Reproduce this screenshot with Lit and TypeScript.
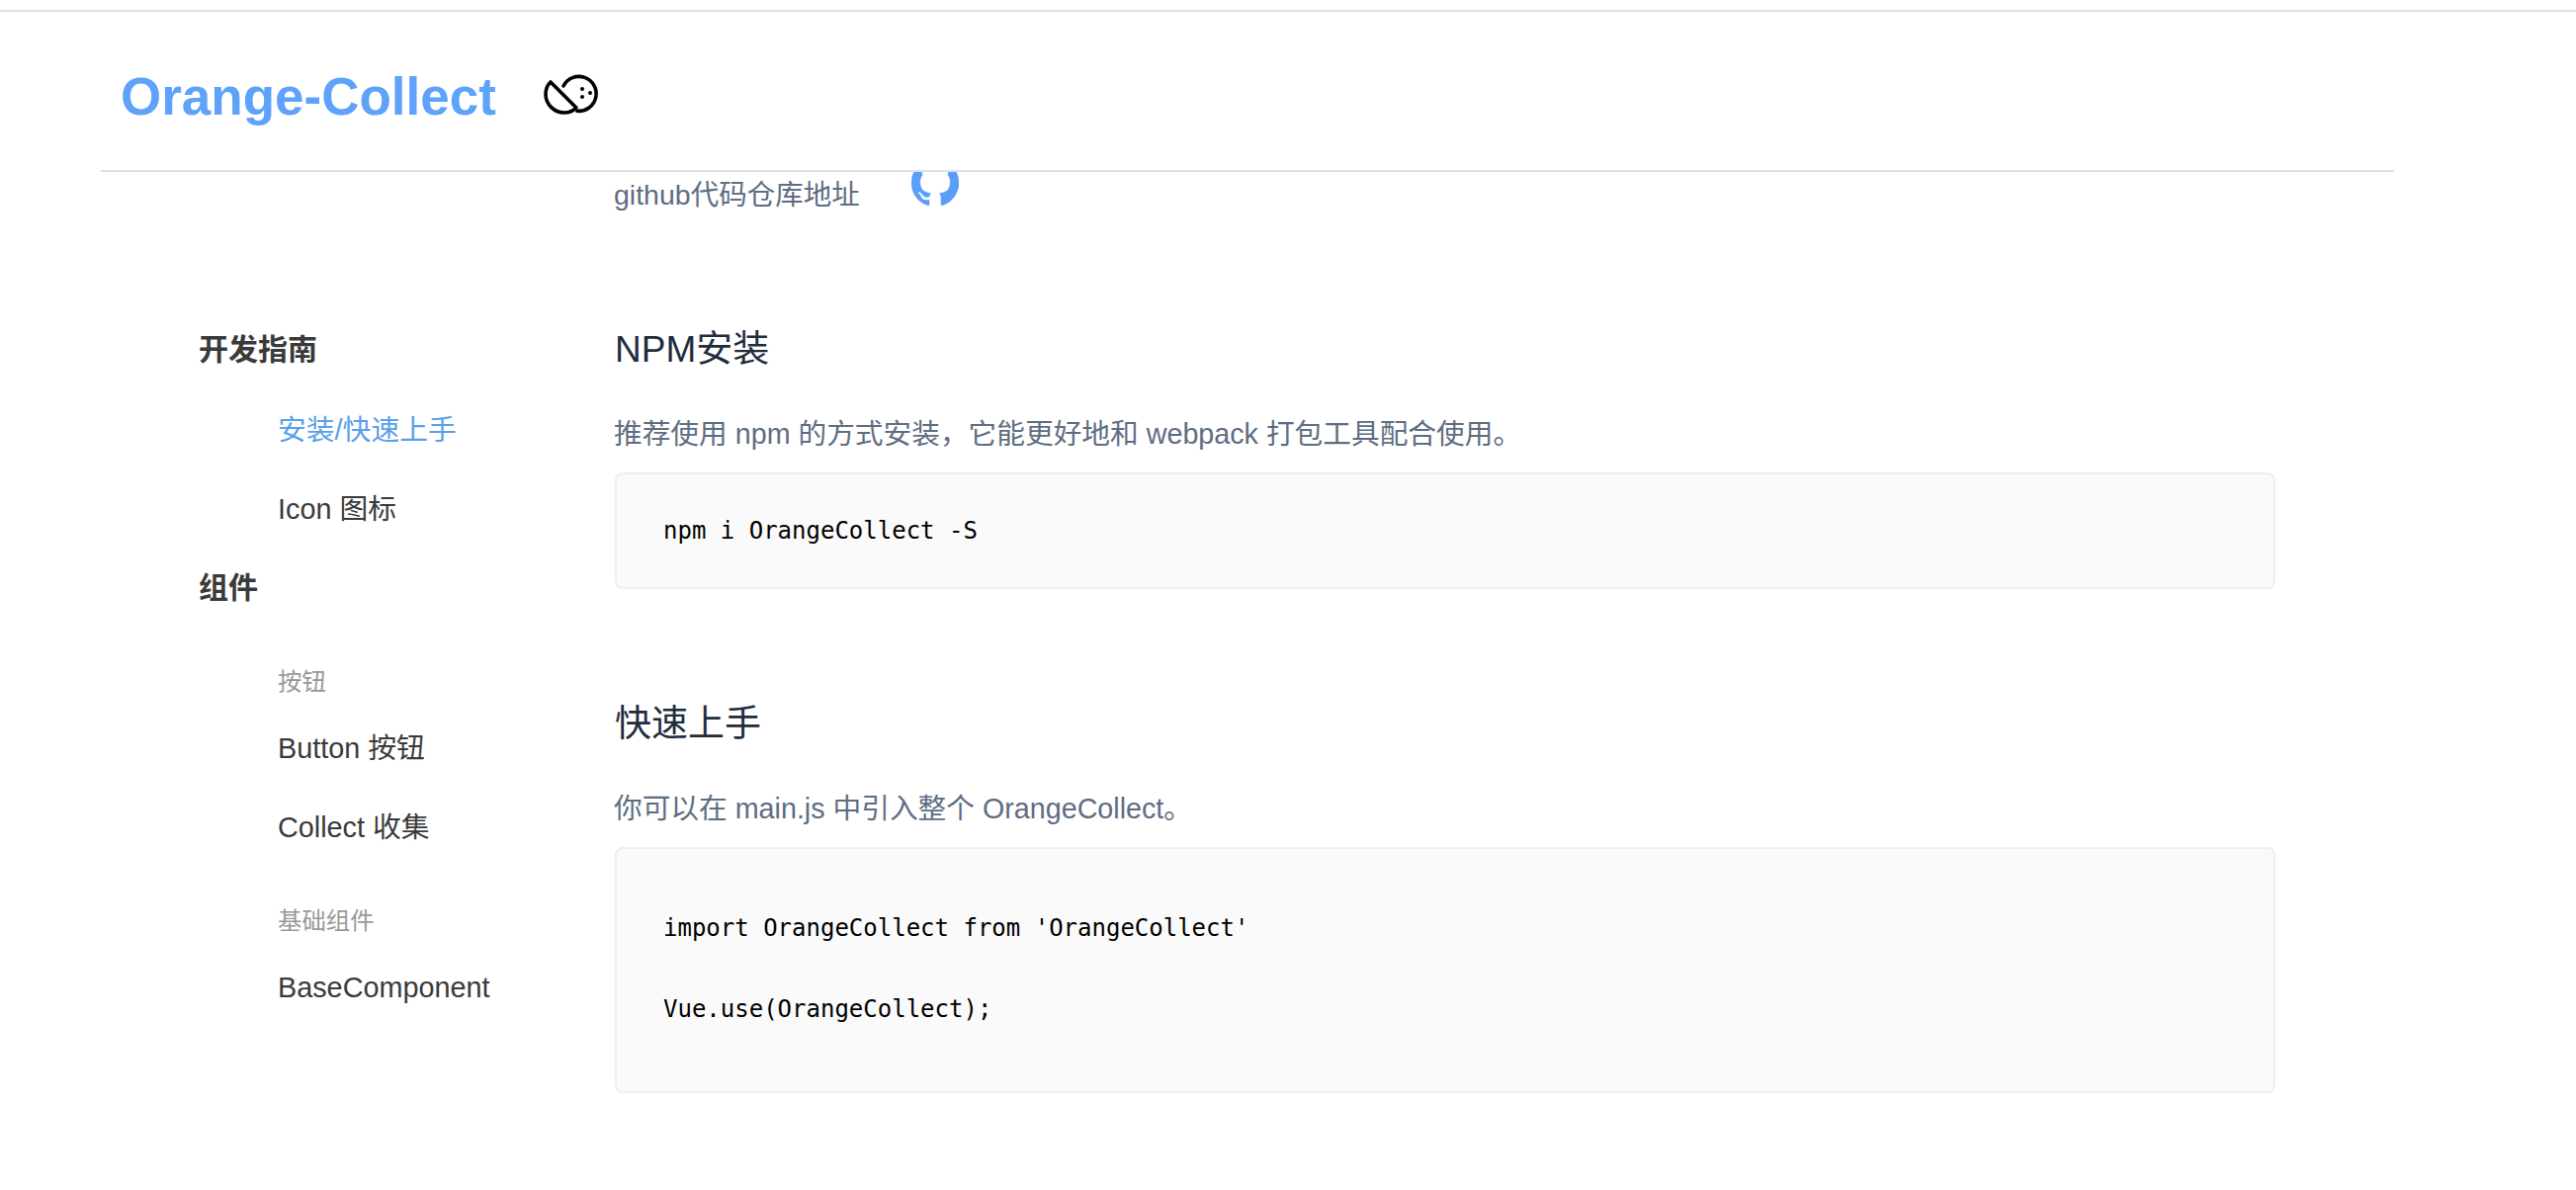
import { LitElement, html, css } from "lit";
import { customElement } from "lit/decorators.js";

const SANS = css`"Liberation Sans", "Noto Sans CJK SC", sans-serif`;

@customElement("app-root")
export class AppRoot extends LitElement {
  static styles = css`
    :host {
      display: block;
      height: 1204px;
      overflow: hidden;
      background: #fff;
      font-family: ${SANS};
      padding-top: 10px;
      box-sizing: border-box;
    }
    .page { border-top: 2px solid #dfdfdf; }
    .head {
      margin-left: 102px;
      width: 2320px;
      height: 162px;
      border-bottom: 2px solid #dcdfe6;
      box-sizing: border-box;
      display: flex;
      align-items: center;
      padding-left: 20px;
    }
    .brand { font-size: 53px; font-weight: 700; color: #5ea2fa; margin-top: 10px; }
    .logo { display: block; margin-left: 47px; margin-top: 8px; }
    .body { display: flex; margin-left: 201px; height: 1030px; overflow: hidden; }
    .side { width: 421px; flex: none; padding-top: 160px; }
    .side-h { font-size: 30px; font-weight: 700; color: #3a3a3a; line-height: 40px; margin-bottom: 41px; }
    .item { font-size: 28.8px; line-height: 40px; color: #3a3a3a; margin-left: 80px; margin-bottom: 40px; }
    .item.on { color: #5a9fea; }
    .item.tail { margin-bottom: 40px; }
    .item.pre { margin-bottom: 58px; }
    .grp { font-size: 24.4px; line-height: 34px; color: #999; margin-left: 80px; margin-bottom: 30px; }
    .side-h.nogap { margin-bottom: 58px; }
    .main { width: 1680px; }
    .gh { display: flex; align-items: flex-start; height: 169px; margin-top: -14px; }
    .gh-t { font-size: 28.5px; color: #5e6d82; line-height: 40px; margin: 17px 0 0 -1px; }
    .gh svg { display: block; margin-left: 52px; margin-top: 1px; }
    h2 { margin: 0; font-size: 37px; font-weight: 400; color: #1f2d3d; line-height: 50px; }
    p { margin: 40px 0 0 -1px; font-size: 28.7px; line-height: 40px; color: #5e6d82; }
    .code {
      margin: 19px 0 0;
      border: 2px solid #eceefa;
      border-radius: 8px;
      background: #fafafa;
      padding: 0 47px;
      font-family: "DejaVu Sans Mono", monospace;
      font-size: 24px;
      color: #000;
      box-sizing: border-box;
    }
    .code div { height: 40px; line-height: 40px; white-space: pre; }
    .c1 { height: 118px; padding-top: 37px; margin-bottom: 112px; }
    .c2 { height: 249px; padding-top: 60px; }
    .c2 .sp { height: 42px; }
  `;

  render() {
    return html`
      <div class="page">
        <header class="head">
          <span class="brand">Orange-Collect</span>
          <svg class="logo" width="60" height="44" viewBox="0 0 60 44" fill="none" stroke="#000" stroke-width="3.6" stroke-linejoin="round" stroke-linecap="round">
            <path d="M21 13 A17.5 17.5 0 1 1 35 38.3" />
            <path d="M8 9 L34 35 C30 39 26 40 22 40 C12 40 3 32 3 21 C3 16 5 12 8 9 Z" />
            <circle cx="40" cy="16" r="2" fill="#000" stroke="none" />
            <circle cx="48" cy="20" r="2" fill="#000" stroke="none" />
            <circle cx="40" cy="24" r="2" fill="#000" stroke="none" />
          </svg>
        </header>
        <div class="body">
          <nav class="side">
            <div class="side-h">开发指南</div>
            <div class="item on">安装/快速上手</div>
            <div class="item tail">Icon 图标</div>
            <div class="side-h nogap">组件</div>
            <div class="grp">按钮</div>
            <div class="item">Button 按钮</div>
            <div class="item pre">Collect 收集</div>
            <div class="grp">基础组件</div>
            <div class="item">BaseComponent</div>
          </nav>
          <main class="main">
            <div class="gh">
              <span class="gh-t">github代码仓库地址</span>
              <svg width="48" height="48" viewBox="0 0 16 16" fill="#5b9ef8"><path d="M8 0C3.58 0 0 3.58 0 8c0 3.54 2.29 6.53 5.47 7.59.4.07.55-.17.55-.38 0-.19-.01-.82-.01-1.49-2.01.37-2.53-.49-2.69-.94-.09-.23-.48-.94-.82-1.13-.28-.15-.68-.52-.01-.53.63-.01 1.08.58 1.23.82.72 1.21 1.87.87 2.33.66.07-.52.28-.87.51-1.07-1.78-.2-3.64-.89-3.64-3.95 0-.87.31-1.59.82-2.15-.08-.2-.36-1.02.08-2.12 0 0 .67-.21 2.2.82.64-.18 1.32-.27 2-.27s1.36.09 2 .27c1.53-1.04 2.2-.82 2.2-.82.44 1.1.16 1.92.08 2.12.51.56.82 1.27.82 2.15 0 3.07-1.87 3.75-3.65 3.95.29.25.54.73.54 1.48 0 1.07-.01 1.93-.01 2.2 0 .21.15.46.55.38A8.01 8.01 0 0 0 16 8c0-4.42-3.58-8-8-8z" stroke="#5b9ef8" stroke-width=".16"/></svg>
            </div>
            <h2>NPM安装</h2>
            <p>推荐使用 npm 的方式安装，它能更好地和 webpack 打包工具配合使用。</p>
            <div class="code c1"><div>npm i OrangeCollect -S</div></div>
            <h2>快速上手</h2>
            <p>你可以在 main.js 中引入整个 OrangeCollect。</p>
            <div class="code c2">
              <div>import OrangeCollect from 'OrangeCollect'</div>
              <div class="sp"></div>
              <div>Vue.use(OrangeCollect);</div>
            </div>
          </main>
        </div>
      </div>
    `;
  }
}
